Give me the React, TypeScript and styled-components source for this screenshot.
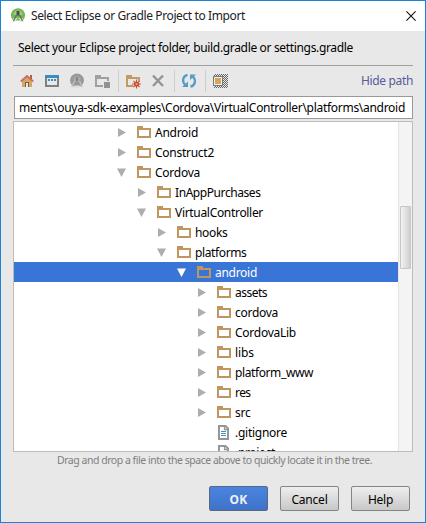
import React from "react";
import styled, { createGlobalStyle } from "styled-components";

const Global = createGlobalStyle`
  * { box-sizing: border-box; }
  body { margin: 0; }
`;

const Dialog = styled.div`
  width: 426px;
  height: 523px;
  border: 1px solid #1883d7;
  background: #e8e8e8;
  font-family: "Noto Sans", "Open Sans", sans-serif;
  font-size: 12px;
  color: #000;
  display: flex;
  flex-direction: column;
  overflow: hidden;
`;

const TitleBar = styled.header`
  height: 30px;
  flex: none;
  background: #fff;
  display: flex;
  align-items: center;
  padding: 0 9px 0 9px;
`;

const Label = styled.span<{ $w: number; $size?: number; $color?: string; $weight?: number }>`
  display: block;
  flex: none;
  width: ${(p) => p.$w}px;
  font-size: ${(p) => p.$size ?? 12}px;
  font-weight: ${(p) => p.$weight ?? 400};
  color: ${(p) => p.$color ?? "inherit"};
  line-height: 18px;
  white-space: pre;
`;

/* Tightens or loosens tracking so that a caption fills its measured width. */
function Text({ w, size, color, weight, children }: { w: number; size?: number; color?: string; weight?: number; children: string }) {
  const ref = React.useRef<HTMLSpanElement>(null);
  const [tracking, setTracking] = React.useState(0);
  React.useLayoutEffect(() => {
    if (!ref.current) return;
    const range = document.createRange();
    range.selectNodeContents(ref.current);
    const natural = range.getBoundingClientRect().width;
    setTracking((w - natural) / children.length);
  }, []);
  return (
    <Label ref={ref} $w={w} $size={size} $color={color} $weight={weight} style={{ letterSpacing: tracking }}>
      {children}
    </Label>
  );
}

const TitleText = styled.div`
  margin-left: 5px;
  flex: 1;
`;

const Content = styled.main`
  padding: 0 12px;
  display: flex;
  flex-direction: column;
`;

const Prompt = styled.div`
  height: 35px;
  padding: 8px 0 0 5px;
  border-bottom: 1px solid #a0a0a0;
`;

const Toolbar = styled.div`
  height: 30px;
  display: flex;
  align-items: center;
  padding-left: 6px;
`;

const Tool = styled.div<{ $gap?: number }>`
  width: 16px;
  height: 16px;
  margin-right: ${(p) => p.$gap ?? 9}px;
  svg { display: block; }
`;

const Separator = styled.div<{ $gap: number }>`
  width: 1px;
  height: 22px;
  background: #cdcdcd;
  margin-right: ${(p) => p.$gap}px;
`;

const Spacer = styled.div`
  flex: 1;
`;

const PathField = styled.div`
  height: 23px;
  margin-left: 1px;
  border: 1px solid #999;
  background: #fff;
  display: flex;
  align-items: center;
  padding-left: 4px;
`;

const TreePanel = styled.div`
  margin-top: 2px;
  height: 331px;
  border: 1px solid #bcbcbc;
  background: #fff;
  display: flex;
  overflow: hidden;
`;

const Rows = styled.div`
  flex: 1;
  overflow: hidden;
`;

const Row = styled.div<{ $level: number; $selected?: boolean }>`
  height: 20px;
  padding-left: ${(p) => 103 + p.$level * 20}px;
  display: flex;
  align-items: center;
  background: ${(p) => (p.$selected ? "#3875d7" : "transparent")};
  color: ${(p) => (p.$selected ? "#fff" : "#000")};
`;

const Arrow = styled.div`
  width: 20px;
  height: 14px;
  svg { display: block; }
`;

const NodeIcon = styled.div`
  width: 18px;
  height: 16px;
  svg { display: block; }
`;

const NodeName = styled.div`
  padding-top: 2px;
`;

const ScrollTrack = styled.div`
  width: 14px;
  border-left: 1px solid #e4e4e4;
  background: #f4f4f4;
  padding: 84px 1px 0;
`;

const Thumb = styled.div`
  width: 11px;
  height: 63px;
  border: 1px solid #c6c6c6;
  border-radius: 1px;
  background: linear-gradient(90deg, #f2f2f2, #cfcfcf);
`;

const Hint = styled.div`
  height: 34px;
  padding-left: 44px;
  span { line-height: 17px; }
`;

const Buttons = styled.footer`
  display: flex;
  gap: 12px;
  padding-left: 196px;
`;

const Button = styled.button<{ $primary?: boolean }>`
  width: 59px;
  height: 25px;
  padding: 2px 0 0;
  border: 1px solid ${(p) => (p.$primary ? "#59687f" : "#858585")};
  border-radius: 2px;
  background: ${(p) => (p.$primary ? "linear-gradient(#4a84e0, #3e72c8)" : "linear-gradient(#eee, #c8c8c8)")};
  color: ${(p) => (p.$primary ? "#f0f0f0" : "#000")};
  font-family: inherit;
  display: flex;
  align-items: center;
  justify-content: center;
`;

const StudioLogo = () => (
  <svg width="16" height="16" viewBox="0 0 16 16">
    <circle cx="8" cy="7.3" r="7" fill="#72b84b" />
    <path d="M3.5 7a4.5 4.5 0 0 1 9 0z" fill="#a7c79a" />
    <path d="M3.5 10 2 15l2.5-1.2L8 9.5l3.500 4.300L14 15l-1.500-5z" fill="#e6eae6" />
    <path d="M6.500 3h3v4.500h-3z" fill="#465248" />
    <path d="M6.500 7 3.500 13M9.500 7l3 6" stroke="#617064" strokeWidth="1.3" />
    <path d="M5.500 12.500h5l1.500 3H4z" fill="#fff" />
  </svg>
);

const CloseIcon = () => (
  <svg width="10" height="10" viewBox="0 0 10 10">
    <path d="M.4.4l9.2 9.2M9.6.4.4 9.6" stroke="#111" strokeWidth="1.1" />
  </svg>
);

const HomeIcon = () => (
  <svg width="16" height="16" viewBox="0 0 16 16">
    <path d="M11 2h2v4h-2z" fill="#b35c48" />
    <path d="M3 8l5-4 5 4v6H3z" fill="#d6a663" />
    <path d="M1.8 8.500 8 3l6.200 5.500" fill="none" stroke="#c86f60" strokeWidth="2" />
    <path d="M6 9h4v5H6z" fill="#765d48" />
    <path d="M7 10h2v4H7z" fill="#e8e8e8" />
  </svg>
);

const DesktopIcon = () => (
  <svg width="16" height="16" viewBox="0 0 16 16" shapeRendering="crispEdges">
    <path fillRule="evenodd" d="M1 4h14v10H1zM3 5v7h10V5z" fill="#808080" />
    <path d="M1 2h14v3H1z" fill="#3b8dbe" />
    <path d="M4 6h2v2H4zM7 6h2v2H7zM10 6h2v2h-2z" fill="#3b8dbe" />
  </svg>
);

const ProjectIcon = () => (
  <svg width="16" height="16" viewBox="0 0 16 16">
    <circle cx="8" cy="7.3" r="6.9" fill="#989898" />
    <path d="M4.5 6.5a3.5 3.5 0 0 1 7 0l-1 2h-5z" fill="#a9a9a9" />
    <path d="M5.5 8 2.8 14M10.5 8l2.7 6" stroke="#bebebe" strokeWidth="1.6" />
    <path d="M7 4h2v4H7z" fill="#858585" />
    <path d="M5.5 12.5h5l1 2h-7z" fill="#dedede" />
  </svg>
);

const ModuleIcon = () => (
  <svg width="16" height="16" viewBox="0 0 16 16" shapeRendering="crispEdges">
    <path d="M1 2h6v2h8v4h-2V6H3v6h6v2H1z" fill="#a0a0a0" />
    <path d="M10 9h6v6h-6z" fill="#929292" />
  </svg>
);

const NewFolderIcon = () => (
  <svg width="16" height="16" viewBox="0 0 16 16">
    <path d="M1 2h6v2h8v4h-2V6H3v6h5v2H1z" fill="#c19a63" />
    <path d="M11.5 6.500v9M7 11h9M8.300 7.800l6.400 6.400M14.700 7.800l-6.400 6.400" stroke="#ca553b" strokeWidth="1.1" />
    <circle cx="11.5" cy="11" r="2.6" fill="#c84d35" />
    <circle cx="11.5" cy="11" r="1.1" fill="#ecb34c" />
  </svg>
);

const DeleteIcon = () => (
  <svg width="16" height="16" viewBox="0 0 16 16">
    <path d="M3 2.500l10 10.500M13 2.500 3 13" stroke="#949494" strokeWidth="2.5" />
  </svg>
);

const RefreshIcon = () => (
  <svg width="16" height="16" viewBox="0 0 16 16">
    <path d="M6.500 1.800C1.500 3 .8 8.500 4.200 12M9.500 13.700c5-1.200 5.700-6.700 2.300-10.200" fill="none" stroke="#559dc6" strokeWidth="2.300" />
    <path d="M1 14h6V8.500zM15 1.500H9V7z" fill="#559dc6" />
  </svg>
);

const HiddenIcon = () => (
  <svg width="16" height="16" viewBox="0 0 16 16" shapeRendering="crispEdges">
    <defs>
      <pattern id="dots" width="2" height="2" patternUnits="userSpaceOnUse">
        <path d="M0 0h1v1H0zM1 1h1v1H1z" fill="#666" />
      </pattern>
    </defs>
    <path d="M2 1h14v14H2z" fill="url(#dots)" />
    <path d="M1 3h10v10H1z" fill="#777" />
    <path d="M2 4h8v8H2z" fill="#f0f0f0" />
    <path d="M3 5h6v6H3z" fill="#d8a45c" />
  </svg>
);

const FolderIcon = () => (
  <svg width="14" height="16" viewBox="0 0 14 16" shapeRendering="crispEdges">
    <path d="M0 2h6v2h8v10H0z" fill="#c09660" />
    <path d="M2 6h10v6H2z" fill="#fff" />
  </svg>
);

const SelectedFolderIcon = () => (
  <svg width="14" height="16" viewBox="0 0 14 16" shapeRendering="crispEdges">
    <path fillRule="evenodd" d="M0 2h6v2h8v10H0zM2 6v6h10V6z" fill="#c09660" />
  </svg>
);

const FileIcon = () => (
  <svg width="14" height="16" viewBox="0 0 14 16">
    <path d="M2 2h6.5L11 4.500V15H2z" fill="#fff" stroke="#969696" strokeWidth="2" />
    <path d="M7.500 2v3.500H11" fill="none" stroke="#969696" strokeWidth="1.3" />
    <path d="M4 7.5h5M4 9.5h5M4 11.5h5" stroke="#3f8ec0" />
  </svg>
);

type Kind = "closed" | "open" | "file";
const nodes: { name: string; level: number; kind: Kind; w: number; selected?: boolean }[] = [
  { name: "Android", level: 0, kind: "closed", w: 43 },
  { name: "Construct2", level: 0, kind: "closed", w: 59 },
  { name: "Cordova", level: 0, kind: "open", w: 45 },
  { name: "InAppPurchases", level: 1, kind: "closed", w: 85.5 },
  { name: "VirtualController", level: 1, kind: "open", w: 88 },
  { name: "hooks", level: 2, kind: "closed", w: 32.5 },
  { name: "platforms", level: 2, kind: "open", w: 51.5 },
  { name: "android", level: 3, kind: "open", w: 42, selected: true },
  { name: "assets", level: 4, kind: "closed", w: 32 },
  { name: "cordova", level: 4, kind: "closed", w: 43 },
  { name: "CordovaLib", level: 4, kind: "closed", w: 61 },
  { name: "libs", level: 4, kind: "closed", w: 19 },
  { name: "platform_www", level: 4, kind: "closed", w: 78 },
  { name: "res", level: 4, kind: "closed", w: 15.5 },
  { name: "src", level: 4, kind: "closed", w: 15.5 },
  { name: ".gitignore", level: 4, kind: "file", w: 52 },
  { name: ".project", level: 4, kind: "file", w: 40 },
];

const ArrowIcon = ({ kind, selected }: { kind: Kind; selected?: boolean }) => (
  <Arrow>
    {kind !== "file" && (
      <svg width="14" height="14" viewBox="0 0 14 14">
        <path d={kind === "open" ? "M0 3.5h9L4.5 12z" : "M1 3l8 4.500L1 12z"} fill={selected ? "#fff" : "#adadad"} />
      </svg>
    )}
  </Arrow>
);

export default function App() {
  return (
    <>
      <Global />
      <Dialog>
        <TitleBar>
          <StudioLogo />
          <TitleText><Text w={214} color="#222">Select Eclipse or Gradle Project to Import</Text></TitleText>
          <CloseIcon />
        </TitleBar>
        <Content>
          <Prompt><Text w={335}>Select your Eclipse project folder, build.gradle or settings.gradle</Text></Prompt>
          <Toolbar>
            <Tool><HomeIcon /></Tool>
            <Tool><DesktopIcon /></Tool>
            <Tool><ProjectIcon /></Tool>
            <Tool $gap={8}><ModuleIcon /></Tool>
            <Separator $gap={6} />
            <Tool><NewFolderIcon /></Tool>
            <Tool $gap={8}><DeleteIcon /></Tool>
            <Separator $gap={6} />
            <Tool $gap={8}><RefreshIcon /></Tool>
            <Separator $gap={6} />
            <Tool><HiddenIcon /></Tool>
            <Spacer />
            <Text w={52} color="#5a5a9c">Hide path</Text>
          </Toolbar>
          <PathField><Text w={386}>{"ments\\ouya-sdk-examples\\Cordova\\VirtualController\\platforms\\android"}</Text></PathField>
          <TreePanel>
            <Rows>
              {nodes.map((n) => (
                <Row key={n.name} $level={n.level} $selected={n.selected}>
                  <ArrowIcon kind={n.kind} selected={n.selected} />
                  <NodeIcon>{n.kind === "file" ? <FileIcon /> : n.selected ? <SelectedFolderIcon /> : <FolderIcon />}</NodeIcon>
                  <NodeName><Text w={n.w}>{n.name}</Text></NodeName>
                </Row>
              ))}
            </Rows>
            <ScrollTrack><Thumb /></ScrollTrack>
          </TreePanel>
          <Hint><Text w={315} size={10.5} color="#808080">Drag and drop a file into the space above to quickly locate it in the tree.</Text></Hint>
          <Buttons>
            <Button $primary><Text w={18} weight={700}>OK</Text></Button>
            <Button><Text w={36}>Cancel</Text></Button>
            <Button><Text w={25}>Help</Text></Button>
          </Buttons>
        </Content>
      </Dialog>
    </>
  );
}
